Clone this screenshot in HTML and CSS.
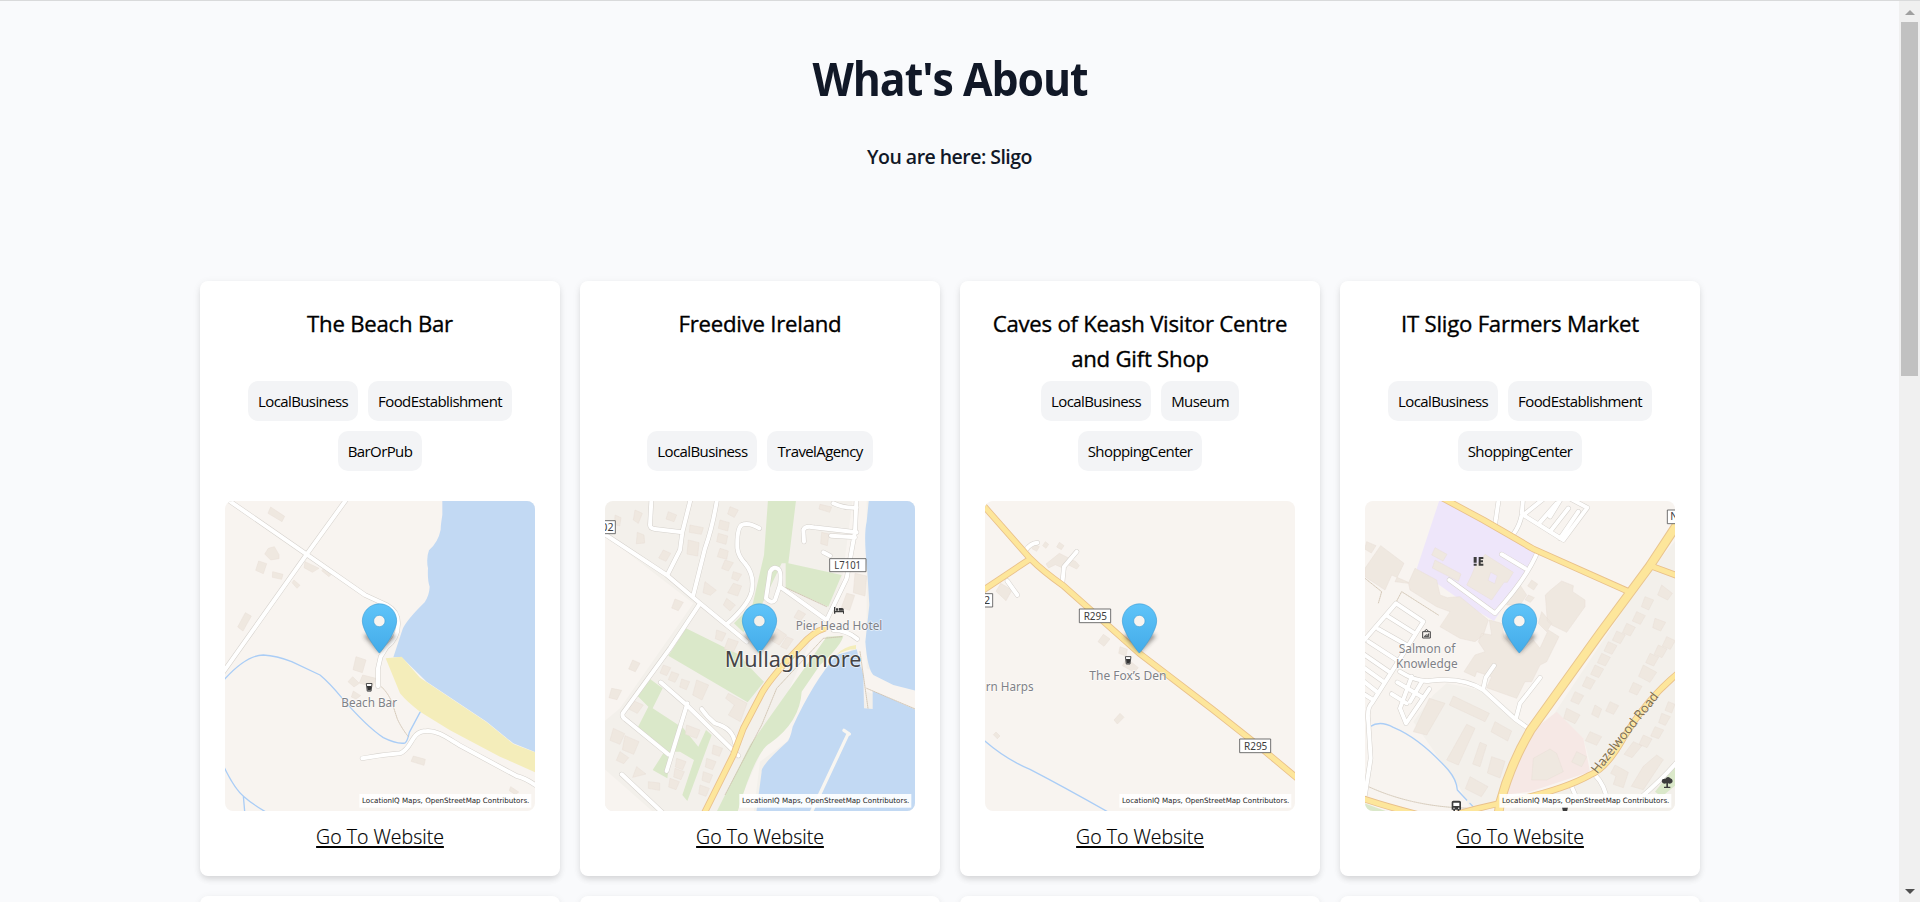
FILE: index.html
```html
<!DOCTYPE html>
<html lang="en">
<head>
<meta charset="utf-8">
<title>What's About</title>
<link rel="stylesheet" href="styles.css">
</head>
<body>
<svg class="defs" width="0" height="0" aria-hidden="true">
  <defs>
    <linearGradient id="pinFill" x1="0" y1="0" x2="0" y2="1"><stop offset="0" stop-color="#5fc4f9"/><stop offset="1" stop-color="#43abe9"/></linearGradient>
    <filter id="soft" x="-50%" y="-50%" width="200%" height="200%"><feGaussianBlur stdDeviation="7"/></filter>
    <symbol id="pin" viewBox="0 0 960 960" overflow="visible">
      <path d="M478 474L432 424Q440 410 478 415Q520 412 528 424Z" fill="#333" opacity=".5" filter="url(#soft)"/>
      <path fill-rule="evenodd" d="M478 474C468 462 427 408 427 378A51 51 0 0 1 530 378C530 408 490 462 478 474ZM478 361A17 17 0 1 0 478.1 361Z" fill="url(#pinFill)" stroke="#3fa0da" stroke-width="2"/>
    </symbol>
    <symbol id="credit" viewBox="0 0 960 960" overflow="visible">
      <rect x="418" y="897" width="516" height="41" fill="#fff" opacity=".9"/>
      <text x="426" y="925" class="credit" textLength="502" lengthAdjust="spacingAndGlyphs">LocationIQ Maps, OpenStreetMap Contributors.</text>
    </symbol>
    <symbol id="cup" viewBox="0 0 22 28" overflow="visible">
      <path d="M2 2H20L17 26H5Z" fill="#fff" stroke="#444" stroke-width="3"/><path d="M4 10H18L16 24H6Z" fill="#333"/>
    </symbol>
  </defs>
</svg>
<div class="window">
<main class="page">
  <h1>What's About</h1>
  <h2>You are here: Sligo</h2>
  <section class="cards">
    <article class="card">
      <h3>The Beach Bar</h3>
      <ul class="tags"><li>LocalBusiness</li><li>FoodEstablishment</li><li>BarOrPub</li></ul>
      <svg class="map" viewBox="15 18 930 930">
        <rect class="land" x="0" y="0" width="960" height="960"/>
        <path class="sea" d="M667 0V60Q662 90 662 104Q655 140 627 166Q618 190 624 220Q622 255 629 275Q628 300 614 322Q560 375 548 402L520 487L545 487L620 560L800 680L880 745L960 777V0Z"/>
        <path class="sand" d="M497 490L545 485L600 548L710 622L800 682L880 747L960 777V838L840 785L690 706L600 650Q560 620 540 595Z"/>
        <path class="bld" d="M152 36l42 28-8 16-42-25zM145 160l18-5 14 24v12l-25 4-18-18zM116 198l24 8-10 30-23-10zM158 230l31 8-4 15-28-6zM222 255l18 16-9 9-15-17zM255 200l42 20-20 12-25-14zM312 220l22 18-7 7-22-18zM76 353l18 10-25 45-16-12zM408 485l30 10-11 38-28-9zM428 540l40 10-10 26-40-12zM398 545l20 20-16 11-18-16zM400 588l22 14-14 10-14-6zM580 783l36 10-4 18-39-12zM872 875l24 16-10 8-18-12z"/>
        <g class="water"><path d="M0 568Q75 480 130 480Q170 482 215 500L300 540Q330 565 365 608Q440 695 490 728Q530 748 555 744Q562 740 568 712L600 652"/><path d="M0 790Q40 880 72 905Q100 930 150 958M70 903L75 960"/></g>
        <path class="trail" d="M484 575Q510 600 520 635L532 672Q545 700 565 725"/>
        <g class="case"><path d="M20 12L260 178L435 300L500 330Q535 350 534 385Q535 430 500 456L482 485L474 520V574"/><path d="M385 5L260 178L0 545"/><path d="M427 790Q480 780 540 775C580 760 570 708 620 708C655 705 690 735 730 757L890 843Q920 850 960 880"/></g>
        <g class="road"><path d="M20 12L260 178L435 300L500 330Q535 350 534 385Q535 430 500 456L482 485L474 520V574"/><path d="M385 5L260 178L0 545"/><path d="M427 790Q480 780 540 775C580 760 570 708 620 708C655 705 690 735 730 757L890 843Q920 850 960 880"/></g>
        <use href="#cup" x="437" y="563" width="21" height="28"/>
        <text class="poi" x="364" y="635" textLength="167" lengthAdjust="spacingAndGlyphs">Beach Bar</text>
        <use href="#credit" width="960" height="960"/><use href="#pin" width="960" height="960"/>
      </svg>
      <a href="#">Go To Website</a>
    </article>
    <article class="card">
      <h3>Freedive Ireland</h3>
      <ul class="tags"><li>LocalBusiness</li><li>TravelAgency</li></ul>
      <svg class="map" viewBox="15 18 930 930">
        <rect class="town" x="0" y="0" width="960" height="960"/>
        <path class="land" d="M0 110L280 325L60 640L0 690ZM0 810L170 960H0ZM800 0V520L960 590V645L800 590V640L760 455L560 740L480 800L460 960H400L640 420L720 300L760 0Z"/>
        <path class="park" d="M505 0H590L565 205L725 240L685 335L557 278V205L545 205L480 340L430 412L402 385L458 328L492 180ZM258 400L420 480Q450 520 492 560L443 622L205 482ZM150 552L188 580L158 640L250 700L295 755L318 705L335 720L262 918L247 900L282 795L240 770L212 770L202 850L158 825L190 775L112 700L145 635L112 602ZM680 425L730 422Q725 450 660 510L605 590Q600 680 510 745Q465 770 410 960H345L450 750Z"/>
        <path class="sea" d="M808 0L800 80Q790 120 802 230L808 330L796 440Q802 520 820 540L880 570L960 590V0ZM770 463L790 540L792 640L818 642V588L840 597L960 650V960H468L485 830Q480 815 560 742Q570 735 578 695Q640 560 710 480Z"/>
        <path class="sand" d="M708 480Q730 455 768 450V463Q740 462 708 480Z"/>
        <path class="bld" d="M45 60l18 8-4 25-15-5zM105 45l22 10-12 30-15-10zM112 112l20 8 2 24-25 2zM190 165l22 10-14 24-22-10zM205 50l25 10-8 20-24-8zM270 90l40 8-6 20-36-6zM265 135l32 8-4 40-32-6zM315 260l34 26-18 15-22-8zM390 35l25 10-12 22-20-10zM360 75l28 8-5 25-28-8zM355 115l28 8-5 25-28-8zM360 160l25 8-5 25-28-8zM375 195l25 8-15 25-20-8zM400 230l25 8-12 20-18-8zM400 265l25 8-12 30-30-10zM380 310l26 20-16 18-20-18zM660 28l35 8-6 16-32-10zM665 112l22 5-5 35-20-6zM765 235l35 8-5 60-35-10zM225 312l25 10-15 25-20-8zM740 295l24 6-15 45-25-8zM350 405l28 10-12 24-20-8zM385 430l30 10-14 30-28-8zM530 400l30 20-22 30-22-12zM560 425l20 8-20 30-18-8zM595 345l22 12-15 20-20-10zM35 580l30 6-14 28-24-6zM98 495l22 10-14 25-20-8zM190 510l22 8-12 24-20-8zM215 530l22 8-12 24-20-8zM245 552l24 8-10 24-20-8zM290 555l36 15-20 45-28-15zM385 595l56 30-20 55-36-20 18-30-26-20zM95 615l35 15-18 25-24-12zM40 700l34 16-14 32-30-12zM75 722l42 18-16 38-34-14zM60 770l26 18-15 18-22-10zM110 815l28 22-40 10zM145 860l34 4v22l-34-6zM260 690l40 15-10 25-34-12zM340 750l28 10-10 24-22-8zM320 790l28 10-10 24-22-8zM310 830l28 10-10 24-22-8zM300 870l28 10-10 24-22-8zM230 790l28 10-10 24-22-8zM225 820l28 10-10 24-22-8zM210 850l28 10-10 24-22-8z"/>
        <g class="pier"><path d="M745 715L630 960M732 706L748 717"/></g>
        <path class="trail" d="M725 425L670 430L530 580L485 690L375 900M557 278L680 335M800 580L960 648M780 470L804 640"/>
        <g class="case"><path d="M0 108L200 240L300 325L440 440M155 0L150 90Q150 100 165 102L247 112M275 0L247 112L240 165L202 240M353 0Q340 90 315 160L280 300M300 325L210 460L68 655Q65 665 75 672L205 778M182 562L260 630L415 782M262 625L200 828M305 642Q320 665 345 685Q400 700 405 745M65 838L195 960M478 100Q445 80 425 90Q410 100 412 160Q415 185 435 205Q465 240 455 290Q445 330 380 388M770 0L765 110L740 250L680 375M700 25Q730 40 770 38M612 140L610 105Q615 92 640 97L770 112M693 122L765 127M670 172L690 182M680 375L540 275M700 405Q740 405 772 432M498 310L510 230Q520 212 535 222Q545 230 540 270L525 315Q515 328 498 310Z"/></g>
        <g class="road"><path d="M0 108L200 240L300 325L440 440M155 0L150 90Q150 100 165 102L247 112M275 0L247 112L240 165L202 240M353 0Q340 90 315 160L280 300M300 325L210 460L68 655Q65 665 75 672L205 778M182 562L260 630L415 782M262 625L200 828M305 642Q320 665 345 685Q400 700 405 745M65 838L195 960M478 100Q445 80 425 90Q410 100 412 160Q415 185 435 205Q465 240 455 290Q445 330 380 388M770 0L765 110L740 250L680 375M700 25Q730 40 770 38M612 140L610 105Q615 92 640 97L770 112M693 122L765 127M670 172L690 182M680 375L540 275M700 405Q740 405 772 432M498 310L510 230Q520 212 535 222Q545 230 540 270L525 315Q515 328 498 310Z"/></g>
        <path class="main-case" d="M674 400Q640 410 605 450Q500 560 480 605L430 700L400 780L310 960"/><path class="main" d="M674 400Q640 410 605 450Q500 560 480 605L430 700L400 780L310 960"/>
        <path class="shield" d="M0 77H46V116H0ZM689 191H798V230H689Z"/>
        <text class="ref" x="4" y="108">02</text><text class="ref" x="703" y="222" textLength="80" lengthAdjust="spacingAndGlyphs">L7101</text>
        <path class="icon" d="M702 336h4v12h26v8h-3v-4h-23v4h-4zM708 340h7v7h-7zM717 339h10q5 0 5 8h-15z"/>
        <text class="poi" x="587" y="405" textLength="260" lengthAdjust="spacingAndGlyphs">Pier Head Hotel</text>
        <use href="#pin" width="960" height="960"/>
        <text class="place" x="374" y="515" textLength="410" lengthAdjust="spacingAndGlyphs">Mullaghmore</text>
        <use href="#credit" width="960" height="960"/>
      </svg>
      <a href="#">Go To Website</a>
    </article>
    <article class="card">
      <h3>Caves of Keash Visitor Centre and Gift Shop</h3>
      <ul class="tags"><li>LocalBusiness</li><li>Museum</li><li>ShoppingCenter</li></ul>
      <svg class="map" viewBox="15 18 930 930">
        <rect class="land" x="0" y="0" width="960" height="960"/>
        <path class="bld" d="M238 175l50 25 10 12-8 10-30-15-12 12-22-10-20 10-8-12zM160 145l18 10-8 14-14-8zM196 140l10 8-8 12-10-8zM238 142l14 10-8 12-14-8zM62 265l34 20-18 32-30-28zM370 418l20 14-18 22-18-14zM420 455l22 8-4 20-22-8zM440 490l35 28-12 14-36-20zM420 655l12 12-20 20-10-12zM48 711l12 12-8 8-12-12z"/>
        <path class="water" d="M0 725Q70 790 150 823Q260 880 400 960"/>
        <g class="case"><path d="M138 165Q150 145 172 143M290 170L252 215L247 265M82 258L112 300"/></g>
        <g class="road"><path d="M138 165Q150 145 172 143M290 170L252 215L247 265M82 258L112 300"/></g>
        <path class="main-case" d="M0 20L150 190Q190 230 250 272L478 475L700 645L820 740L970 865M0 292L150 192"/><path class="main" d="M0 20L150 190Q190 230 250 272L478 475L700 645L820 740L970 865M0 292L150 192"/>
        <path class="shield" d="M0 296H38V336H0ZM298 342H392V383H298ZM779 732H872V773H779Z"/>
        <text class="ref" x="12" y="326">2</text><text class="ref" x="311" y="374" textLength="70" lengthAdjust="spacingAndGlyphs">R295</text><text class="ref" x="792" y="764" textLength="70" lengthAdjust="spacingAndGlyphs">R295</text>
        <use href="#cup" x="434" y="483" width="21" height="26"/>
        <text class="poi" x="328" y="556" textLength="231" lengthAdjust="spacingAndGlyphs">The Fox’s Den</text>
        <text class="poi" x="17" y="588" textLength="144" lengthAdjust="spacingAndGlyphs">rn Harps</text>
        <use href="#credit" width="960" height="960"/><use href="#pin" width="960" height="960"/>
      </svg>
      <a href="#">Go To Website</a>
    </article>
    <article class="card">
      <h3>IT Sligo Farmers Market</h3>
      <ul class="tags"><li>LocalBusiness</li><li>FoodEstablishment</li><li>ShoppingCenter</li></ul>
      <svg class="map" viewBox="15 18 930 930">
        <rect class="land" x="0" y="0" width="960" height="960"/>
        <path class="town" d="M960 120L860 240L580 660L670 730L700 840L520 900L430 960H960ZM520 705L385 590L260 565L220 600L160 680L300 880L330 940H400Z"/>
        <path class="school" d="M240 10L540 172L402 378L330 335L170 222Z"/>
        <path class="retail" d="M590 650L670 730L690 830L510 890L430 900L520 705Z"/>
        <path class="park" d="M945 815L885 890L905 905L960 860ZM0 920L110 960H0Z"/>
        <path class="bld" d="M62 152L132 205L105 260L145 265L165 220L230 255L240 300L262 308L300 305L385 375L370 420L345 440L300 430L240 395L270 350L230 335L150 285L145 262L95 240L75 285L15 245V220ZM20 140l28 12-14 22-20-12zM225 158l36 20-12 20-34-18zM225 195l78 42-8 22-78-40zM605 258L640 272L638 290L675 315V335L620 412L575 390L562 378L556 300L572 285ZM388 375L425 385L432 425L478 474L520 435L540 460L565 405L597 425L560 500L540 510L515 560L495 560L470 610L380 578L395 545L350 530L345 545L312 530L345 480L375 470L355 440L365 415L395 420ZM480 270L500 300L480 330L440 330L460 285ZM545 350L575 385L560 410L535 385ZM515 255l18 12-12 18-18-12zM505 300l18 8-12 14-16-8zM280 603L388 655L375 680L268 630ZM208 610L255 625L200 720L160 710ZM320 688L345 700L295 810L260 795ZM360 742l20 8-20 65-22-8zM405 680l50 28-12 30-50-28zM395 785l40 14-15 50-38-15zM330 845l54 30-20 30-48-24zM570 762L590 775L610 830L560 855L515 855L520 790ZM905 270l32 25-14 20-30-15zM855 305l26 10-15 30-22-10zM885 370l32 12-15 26-24-10zM830 350l26 12-15 26-24-10zM800 385l26 12-15 26-24-10zM770 408l26 12-15 26-24-10zM745 440l26 12-15 26-24-10zM725 475l26 12-15 26-24-10zM705 510l26 12-15 26-24-10zM680 545l26 12-15 26-24-10zM920 425l26 12-15 26-24-10zM895 450l26 12-15 26-24-10zM870 475l26 12-15 26-24-10zM850 510l40 22-20 30-34-18zM820 562l26 12-15 26-24-10zM750 620l26 12-15 26-24-10zM645 590l26 12-15 26-24-10zM620 640l40 20-15 26-34-16zM705 630l20 12-10 26-20-10zM690 710l35 15-15 26-34-14zM650 770l30 15-15 30-30-14zM925 620l20 8-10 26-20-8zM905 655l26 10-15 26-20-8zM885 695l26 10-15 26-24-8zM850 720l26 12-15 26-24-10zM820 740l26 12-30 36-24-10zM765 810l40 22-15 46-30-10 8-25-16-8zM890 780l20 14-60 90-36-10 36-60z"/>
        <path class="bld" fill-rule="evenodd" d="M375 178L460 232L442 262L432 262L395 315L320 270L335 240L345 215ZM392 232L384 256L404 266L412 242Z"/>
        <path class="trail" d="M15 250L65 290L55 325M110 318L125 290L235 360M15 870Q160 940 350 940L400 930"/>
        <path class="water" d="M30 695Q60 675 100 697Q180 730 265 825Q290 855 292 885L320 915M330 925l15 16"/>
        <g class="case"><path d="M418 0L405 90M490 0L485 60Q480 90 460 118M565 0L490 60L610 135L682 38L610 0M590 25L540 82M625 40L570 110M655 50L600 130M610 0L570 65M425 178L495 220M532 172Q500 250 405 355L268 255M0 450L108 325L190 380L35 625Q20 640 25 680L32 790L15 900M80 362L160 412M55 402L140 450M25 440L110 495M0 470L90 532M0 510L70 560M0 550L50 590M0 590L40 615M120 530Q170 562 210 557Q310 545 370 585L465 672L512 705M402 512L377 548L370 580M540 548L480 625L468 670M112 562L185 605M155 545L120 640L138 685L208 582M95 597L140 625M185 560L150 620M635 875L650 910M705 840Q735 870 742 920M840 910Q920 840 960 790"/></g>
        <g class="road"><path d="M418 0L405 90M490 0L485 60Q480 90 460 118M565 0L490 60L610 135L682 38L610 0M590 25L540 82M625 40L570 110M655 50L600 130M610 0L570 65M425 178L495 220M532 172Q500 250 405 355L268 255M0 450L108 325L190 380L35 625Q20 640 25 680L32 790L15 900M80 362L160 412M55 402L140 450M25 440L110 495M0 470L90 532M0 510L70 560M0 550L50 590M0 590L40 615M120 530Q170 562 210 557Q310 545 370 585L465 672L512 705M402 512L377 548L370 580M540 548L480 625L468 670M112 562L185 605M155 545L120 640L138 685L208 582M95 597L140 625M185 560L150 620M635 875L650 910M705 840Q735 870 742 920M840 910Q920 840 960 790"/></g>
        <path class="main-case" d="M240 5L370 75Q440 115 520 162L800 287M870 212L960 245M960 530Q860 610 790 730Q740 820 690 840Q600 890 420 925Q350 940 280 960M0 908Q80 935 180 960"/><path class="trunk-case" d="M960 75L870 212L720 415L512 705Q450 810 420 925L415 960"/>
        <path class="main" d="M240 5L370 75Q440 115 520 162L800 287M870 212L960 245M960 530Q860 610 790 730Q740 820 690 840Q600 890 420 925Q350 940 280 960M0 908Q80 935 180 960"/><path class="trunk" d="M960 75L870 212L720 415L512 705Q450 810 420 925L415 960"/>
        <path class="shield" d="M922 45H970V86H922Z"/><text class="ref" x="931" y="76">N</text>
        <path class="icon" d="M341 186h9v17h-9zM341 206h9v6h-9zM356 186h14v6h-8v4h7v6h-7v4h8v6h-14z"/>
        <path d="M188 410h23v19h-23zM194 409Q199 398 205 409M193 425l5-6 4 3 4-6v9z" fill="none" stroke="#444" stroke-width="3"/>
        <path class="icon" d="M906 862q-3-12 10-11q7-9 15-1q9 2 6 12q-5 7-13 3v10h7v4h-19v-4h7v-10q-9 3-13-3zM275 922q0-5 5-5h18q5 0 5 5v22h-5v6h-5v-6h-8v6h-5v-6h-5z"/><path d="M280 923h18v10h-18zM280 938h4v3h-4zM294 938h4v3h-4z" fill="#fff"/><path class="icon" d="M606 937h18l-3 13h-12z"/>
        <text class="poi" x="116" y="474" textLength="170" lengthAdjust="spacingAndGlyphs">Salmon of</text><text class="poi" x="108" y="519" textLength="185" lengthAdjust="spacingAndGlyphs">Knowledge</text>
        <text class="street" transform="translate(712 838) rotate(-51.5)" textLength="298" lengthAdjust="spacingAndGlyphs">Hazelwood Road</text>
        <use href="#credit" width="960" height="960"/><use href="#pin" width="960" height="960"/>
      </svg>
      <a href="#">Go To Website</a>
    </article>
    <article class="card"></article><article class="card"></article><article class="card"></article><article class="card"></article>
  </section>
</main>
<aside class="scrollbar">
  <svg width="10" height="5"><path d="M0 5L5 0L10 5Z" fill="#a0a0a0"/></svg>
  <div class="track"><div class="thumb"></div></div>
  <svg width="10" height="5"><path d="M0 0H10L5 5Z" fill="#505050"/></svg>
</aside>
</div>
</body>
</html>
```
FILE: styles.css
```css
* { box-sizing: border-box; }
body { margin: 0; font-family: "Open Sans", "Noto Sans", sans-serif; font-weight: 300; color: #000; }
.defs { display: block; height: 0; }
.window { display: flex; height: 902px; overflow: hidden; border-top: 1px solid #d9dadb; background: #f9fafc; }
.page { flex: 0 0 1899px; height: 901px; overflow: hidden; text-align: center; }
h1, h2, h3 { margin: 0; }
h1 { padding: 42px 0 0 1px; font-size: 46px; line-height: 70px; font-weight: 700; letter-spacing: -1.1px; color: #111827; transform: scaleX(.93); }
h2 { margin-top: 29px; font-size: 19.5px; line-height: 30px; font-weight: 600; letter-spacing: -.53px; color: #111827; }
.cards { display: grid; grid-template-columns: repeat(4, 360px); gap: 20px; padding: 109px 0 0 200px; }
.card { display: flex; flex-direction: column; align-items: center; height: 595px; padding: 25px; border-radius: 8px; background: #fff; box-shadow: 0 4px 6px -1px rgba(0,0,0,.1), 0 2px 8px rgba(0,0,0,.07); }
h3 { flex: none; width: 320px; height: 70px; font-size: 22.2px; line-height: 35px; font-weight: 500; letter-spacing: -.24px; -webkit-text-stroke: .35px #000; }
.tags { display: flex; flex: none; flex-wrap: wrap; justify-content: center; align-content: flex-end; gap: 10px; width: 310px; height: 90px; margin: 5px 0 30px; padding: 0; list-style: none; }
.tags li { height: 40px; padding: 0 10px; border-radius: 10px; background: #f3f4f6; font-size: 15px; line-height: 41px; font-weight: 400; letter-spacing: -.6px; }
.map { display: block; flex: none; width: 310px; height: 310px; border-radius: 8px; }
.card a { flex: none; margin-top: 11px; font-size: 19.5px; line-height: 30px; letter-spacing: 0; color: #000; -webkit-text-stroke: .2px #000; text-decoration: underline; text-decoration-thickness: 2px; text-underline-offset: 2px; }
.scrollbar { display: flex; flex-direction: column; align-items: center; justify-content: space-between; width: 21px; padding: 9px 0 8px; background: #f0f0f0; }
.scrollbar svg { display: block; }
.track { flex: 1; width: 17px; padding-top: 7px; }
.thumb { height: 354px; background: #c1c1c1; }
.land { fill: #f8f4f0; }
.town { fill: #f3f0eb; }
.sea { fill: #c2d9f3; }
.sand { fill: #f4edba; }
.park { fill: #dae8c9; }
.school { fill: #eee6fa; }
.retail { fill: #f6e8e5; }
.bld { fill: #efe8e0; stroke: #e8dfd6; stroke-width: 1.5; }
.water, .trail, .case, .road, .pier, .main-case, .main, .trunk-case, .trunk { fill: none; stroke-linejoin: round; stroke-linecap: round; }
.water { stroke: #aacdf6; stroke-width: 4; }
.trail { stroke: #cdbfac; stroke-width: 2.5; stroke-dasharray: 3 3; }
.case { stroke: #d5d1cc; stroke-width: 15; }
.road { stroke: #fff; stroke-width: 12; }
.pier { stroke: #f8f6f1; stroke-width: 10; }
.main-case { stroke: #e9c08b; stroke-width: 20; }
.main { stroke: #fde69b; stroke-width: 15; }
.trunk-case { stroke: #e9c58f; stroke-width: 29; }
.trunk { stroke: #fde69b; stroke-width: 23; }
.shield { fill: #fff; stroke: #555; stroke-width: 2.5; }
.icon { fill: #3c3c3c; }
.map text, .credit { font-family: "Noto Sans", sans-serif; font-weight: 400; }
.map .ref { font-size: 32px; fill: #3c3c3c; }
.map .poi { font-size: 39px; fill: #7f8186; stroke: #fff; stroke-opacity: .7; stroke-width: 4; paint-order: stroke; }
.map .place { font-size: 63px; fill: #444446; stroke: #fff; stroke-opacity: .6; stroke-width: 5; paint-order: stroke; }
.map .street { font-size: 39px; fill: #80704f; stroke: #fff; stroke-opacity: .4; stroke-width: 3; paint-order: stroke; }
.map .credit, .credit { font-family: "DejaVu Sans", sans-serif; font-size: 22px; fill: #222; }
```
